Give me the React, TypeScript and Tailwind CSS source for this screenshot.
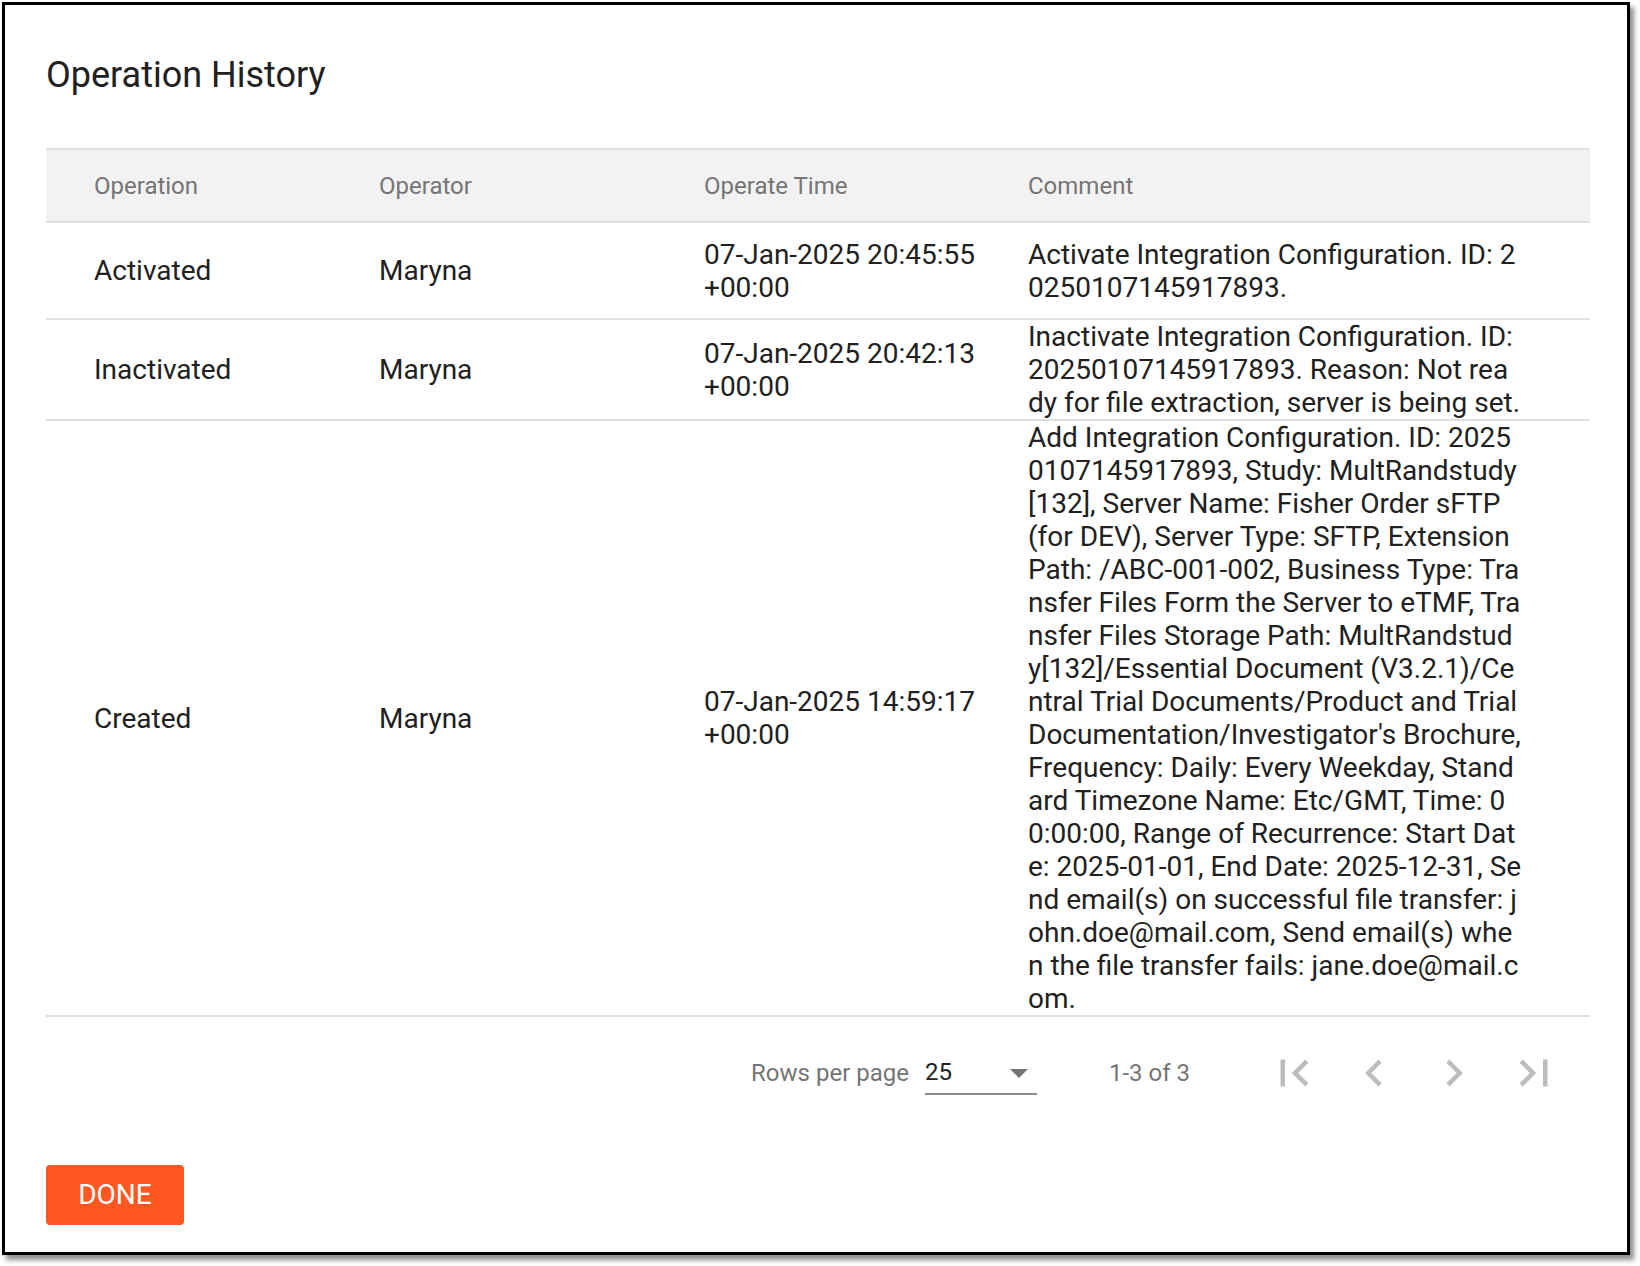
import React from "react";

type Row = {
  operation: string;
  operator: string;
  time: string[];
  comment: string[];
};

const rows: Row[] = [
  {
    operation: "Activated",
    operator: "Maryna",
    time: ["07-Jan-2025 20:45:55", "+00:00"],
    comment: ["Activate Integration Configuration. ID: 2", "0250107145917893."],
  },
  {
    operation: "Inactivated",
    operator: "Maryna",
    time: ["07-Jan-2025 20:42:13", "+00:00"],
    comment: [
      "Inactivate Integration Configuration. ID:",
      "20250107145917893. Reason: Not rea",
      "dy for file extraction, server is being set.",
    ],
  },
  {
    operation: "Created",
    operator: "Maryna",
    time: ["07-Jan-2025 14:59:17", "+00:00"],
    comment: [
      "Add Integration Configuration. ID: 2025",
      "0107145917893, Study: MultRandstudy",
      "[132], Server Name: Fisher Order sFTP",
      "(for DEV), Server Type: SFTP, Extension",
      "Path: /ABC-001-002, Business Type: Tra",
      "nsfer Files Form the Server to eTMF, Tra",
      "nsfer Files Storage Path: MultRandstud",
      "y[132]/Essential Document (V3.2.1)/Ce",
      "ntral Trial Documents/Product and Trial",
      "Documentation/Investigator's Brochure,",
      "Frequency: Daily: Every Weekday, Stand",
      "ard Timezone Name: Etc/GMT, Time: 0",
      "0:00:00, Range of Recurrence: Start Dat",
      "e: 2025-01-01, End Date: 2025-12-31, Se",
      "nd email(s) on successful file transfer: j",
      "ohn.doe@mail.com, Send email(s) whe",
      "n the file transfer fails: jane.doe@mail.c",
      "om.",
    ],
  },
];

const iconPaths = {
  first: "M18.41 16.59L13.82 12l4.59-4.59L17 6l-6 6 6 6zM6 6h2v12H6z",
  prev: "M15.41 7.41L14 6l-6 6 6 6 1.41-1.41L10.83 12z",
  next: "M10 6L8.59 7.41 13.17 12l-4.58 4.59L10 18l6-6z",
  last: "M5.59 7.41L10.18 12l-4.59 4.59L7 18l6-6-6-6zM16 6h2v12h-2z",
};

function PageIcon({ d }: { d: string }) {
  return (
    <button
      type="button"
      disabled
      className="flex h-[80px] w-[80px] items-center justify-center"
    >
      <svg viewBox="0 0 24 24" className="h-[54px] w-[54px]" fill="#bdbdbd">
        <path d={d} />
      </svg>
    </button>
  );
}

export default function App() {
  return (
    <div className="min-h-screen bg-white font-['Roboto','Liberation_Sans',sans-serif] text-[#212121]">
      <div className="ml-[2px] mt-[2px] box-border flex h-[1253px] w-[1628px] flex-col border-[3px] border-black bg-white pl-[41px] pr-[37px] pt-[49px] shadow-[4px_5px_5px_rgba(0,0,0,0.45)]">
        <h2 className="text-[36px] font-normal leading-[42px]">Operation History</h2>

        <div className="mt-[52px]">
          {/* header */}
          <div className="grid h-[75px] grid-cols-[333px_325px_324px_1fr] items-center border-y-2 border-[#e0e0e0] bg-[#f2f2f2] text-[24px] leading-[28px] text-[#757575]">
            <div className="pl-[48px]">Operation</div>
            <div>Operator</div>
            <div>Operate Time</div>
            <div>Comment</div>
          </div>

          {/* body */}
          {rows.map((r) => (
            <div
              key={r.operation}
              className="grid min-h-[97px] grid-cols-[333px_325px_324px_1fr] items-center border-b-2 border-[#e0e0e0] text-[28px] leading-[33px]"
            >
              <div className="pl-[48px]">{r.operation}</div>
              <div>{r.operator}</div>
              <div>
                {r.time.map((t) => (
                  <div key={t} className="whitespace-nowrap">
                    {t}
                  </div>
                ))}
              </div>
              <div>
                {r.comment.map((c, i) => (
                  <div key={i} className="whitespace-nowrap">
                    {c}
                  </div>
                ))}
              </div>
            </div>
          ))}

          {/* pagination */}
          <div className="flex h-[112px] items-center justify-end pr-[16px] text-[24px] leading-[28px]">
            <span className="text-[#757575]">Rows per page</span>
            <div className="relative ml-[16px] flex h-[44px] w-[112px] items-center border-b-2 border-[#8c8c8c]">
              <span className="text-[#212121]">25</span>
              <svg
                viewBox="0 0 18 9"
                className="absolute left-[85px] top-[18px] h-[9px] w-[18px]"
                fill="#757575"
              >
                <path d="M0 0h18L9 9z" />
              </svg>
            </div>
            <span className="ml-[72px] text-[#757575]">1-3 of 3</span>
            <div className="ml-[64px] flex">
              <PageIcon d={iconPaths.first} />
              <PageIcon d={iconPaths.prev} />
              <PageIcon d={iconPaths.next} />
              <PageIcon d={iconPaths.last} />
            </div>
          </div>
        </div>

        <div className="mt-[36px]">
          <button
            type="button"
            className="flex h-[60px] w-[138px] items-center justify-center rounded-[4px] bg-[#ff5722] text-[28px] uppercase leading-none text-white"
          >
            Done
          </button>
        </div>
      </div>
    </div>
  );
}
